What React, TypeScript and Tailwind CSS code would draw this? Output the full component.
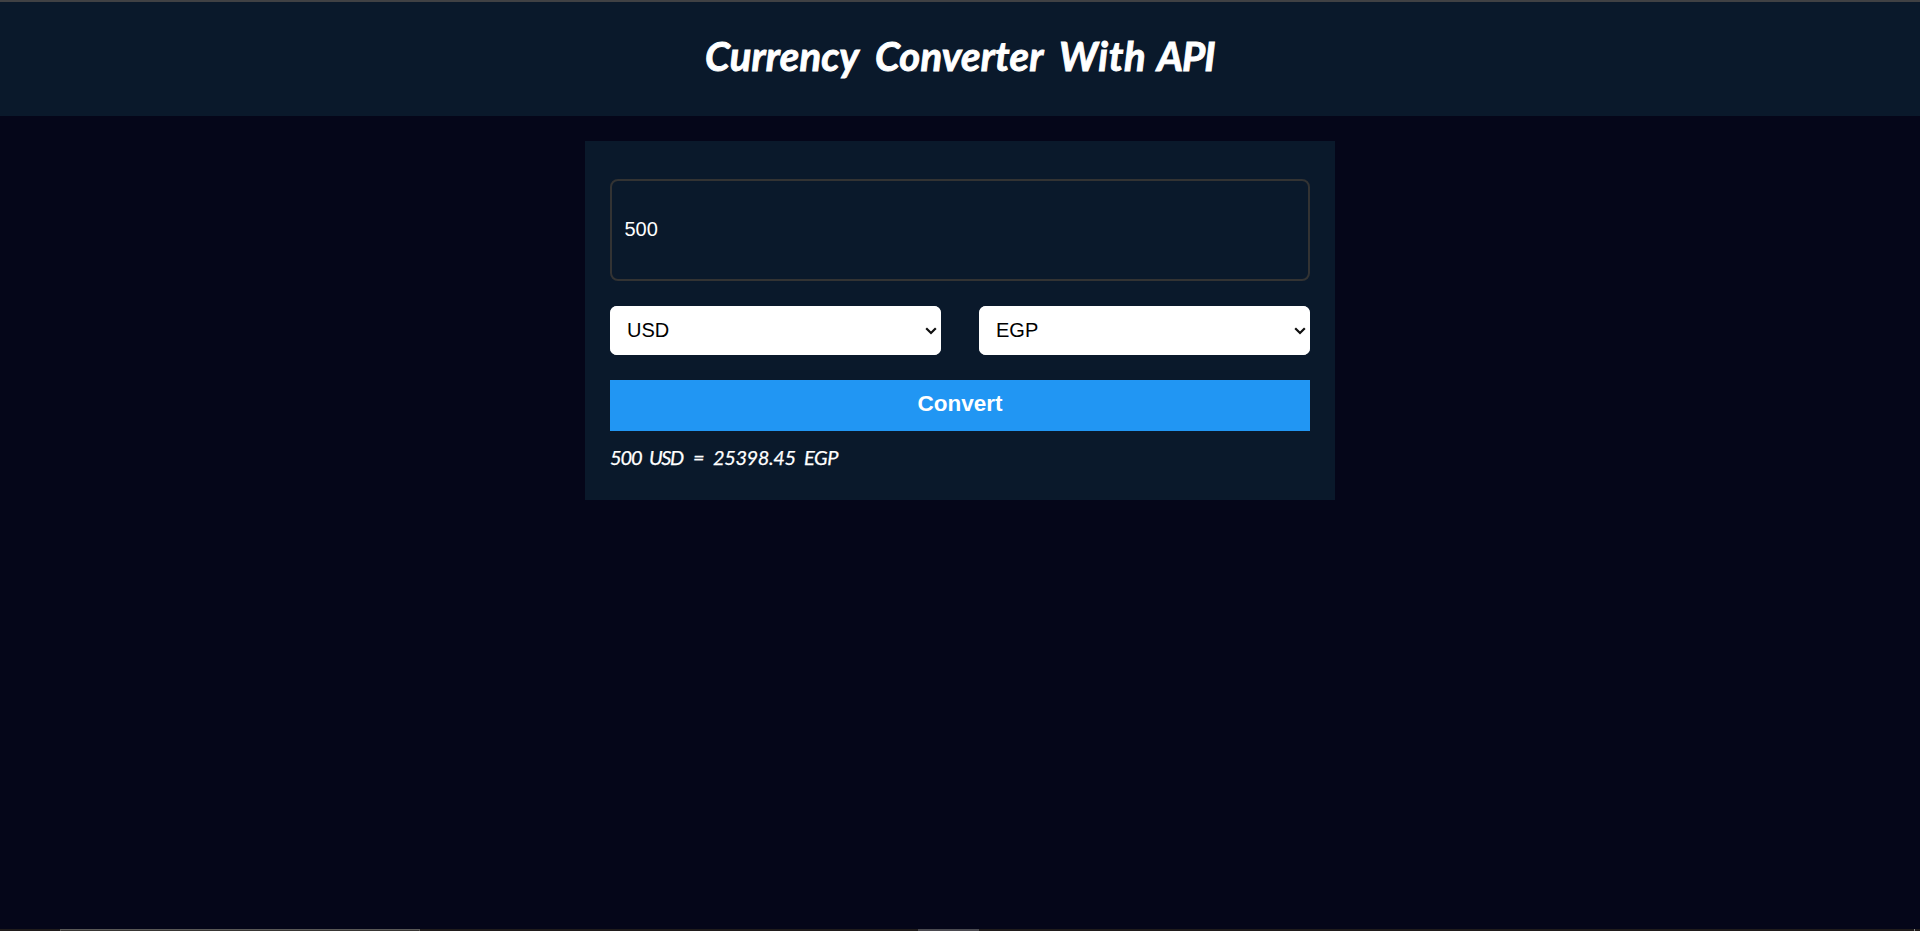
import { useState } from 'react';

const currencies = ['USD', 'EGP', 'EUR', 'GBP'];

function CurrencySelect({ initial }: { initial: string }) {
  const [value, setValue] = useState(initial);
  return (
    <div className="grid h-[49px] w-[331px] items-center rounded-[7px] bg-white">
      <select
        value={value}
        onChange={(e) => setValue(e.target.value)}
        className="col-start-1 row-start-1 h-full w-full appearance-none rounded-[7px] bg-white px-[17px] pb-[1px] text-[20px] text-black outline-none"
      >
        {currencies.map((c) => (
          <option key={c}>{c}</option>
        ))}
      </select>
      <svg
        className="pointer-events-none col-start-1 row-start-1 mr-[4px] justify-self-end"
        width="12"
        height="8"
        viewBox="0 0 12 8"
        fill="none"
        stroke="#101010"
        strokeWidth="2.2"
      >
        <path d="M1.2 1.2 6 6 10.8 1.2" />
      </svg>
    </div>
  );
}

export default function App() {
  const [amount, setAmount] = useState('500');
  return (
    <div className="flex h-[931px] w-full flex-col overflow-hidden bg-[#050619] font-['Liberation_Sans',Arial,sans-serif]">
      <div className="h-[2px] shrink-0 bg-[#404144]" />
      <header className="flex h-[114px] shrink-0 justify-center bg-[#0a192b] pt-[26px]">
        <h1 className="flex w-[510px] whitespace-nowrap font-['Lato',sans-serif] text-[40px] leading-[56px] font-bold text-white italic [-webkit-text-stroke:0.9px_white]">
          <span className="w-[170px] tracking-[0.2px]">Currency</span>{' '}
          <span className="w-[184px] tracking-[0.2px]">Converter</span>{' '}
          <span className="w-[98px] tracking-[0.6px]">With</span>{' '}
          <span className="tracking-[-1px]">API</span>
        </h1>
      </header>
      <main className="mx-auto mt-[25px] flex h-[359px] w-[750px] shrink-0 flex-col bg-[#0a192b] px-[25px] pt-[38px]">
        <input
          value={amount}
          onChange={(e) => setAmount(e.target.value)}
          className="h-[102px] w-full rounded-[8px] border-2 border-[#333333] bg-transparent px-[12.5px] pb-[1px] text-[20px] text-white outline-none"
        />
        <div className="mt-[25px] flex justify-between">
          <CurrencySelect initial="USD" />
          <CurrencySelect initial="EGP" />
        </div>
        <button className="mt-[25px] h-[51px] w-full bg-[#2196f3] pb-[3px] text-[22.5px] font-bold text-white">
          Convert
        </button>
        <p className="mt-[12px] flex whitespace-nowrap font-['Lato',sans-serif] text-[20px] leading-[28px] text-white italic [-webkit-text-stroke:0.25px_white]">
          <span className="w-[39px] tracking-[-1.1px]">500</span>{' '}
          <span className="w-[44px] tracking-[-1.4px]">USD</span>{' '}
          <span className="w-[20px]">=</span>{' '}
          <span className="w-[91px] tracking-[-0.4px]">25398.45</span>{' '}
          <span className="tracking-[-0.4px]">EGP</span>
        </p>
      </main>
      <footer className="mt-auto flex h-[2px] shrink-0 bg-[#201c1c]">
        <div className="ml-[60px] h-[2px] w-[360px] border-x border-t border-[#5a5856] bg-[#383634]" />
        <div className="ml-[498px] h-[2px] w-[61px] bg-[#4b4a50]" />
        <div className="mr-[5px] ml-auto h-[2px] w-px bg-[#8a8a8a]" />
      </footer>
    </div>
  );
}
